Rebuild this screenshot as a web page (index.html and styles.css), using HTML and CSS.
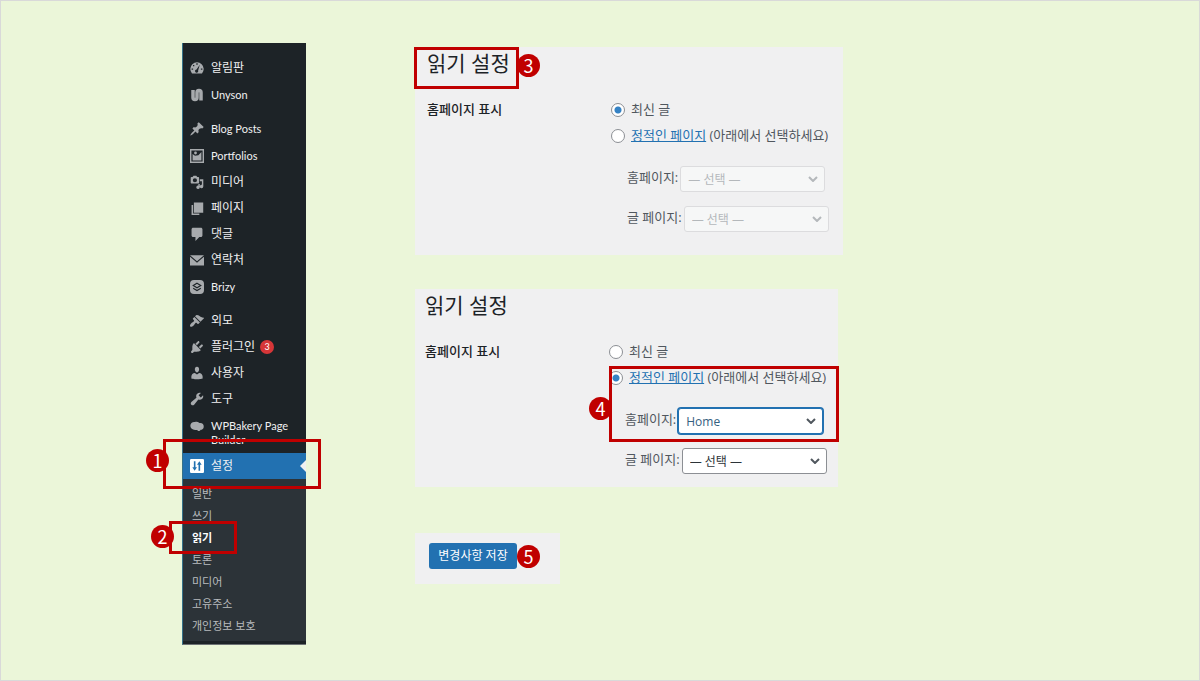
FILE: index.html
```html
<!DOCTYPE html>
<html lang="ko">
<head>
  <meta charset="UTF-8" />
  <meta name="viewport" content="width=device-width, initial-scale=1.0"/>
  <title>읽기 설정</title>
  <link rel="stylesheet" href="styles.css">
</head>
<body>
  <main class="guide">
    <nav class="sidebar">
      <ul class="menu">
        <li><a href="#"><svg viewBox="0 0 14 14"><path fill-rule="evenodd" d="M2 12.500A6.700 6.700 0 1 1 12 12.500zM6.300 2.200v1.500h1.400V2.200zM3 4v1.300h1.300V4zM1.600 7.500v1.300h1.500V7.500zM10.900 7.500v1.300h1.500V7.500zM9.800 3.800L6.500 8.500a1.600 1.600 0 1 0 1.600 1z"/></svg>알림판</a></li>
        <li class="latin"><a href="#"><svg viewBox="0 0 14 14"><path d="M3 2v7.500a2 2 0 0 0 4 0V4.500a2 2 0 0 1 4 0V12.500" fill="none" stroke="currentColor" stroke-width="3.500"/></svg>Unyson</a></li>
        <li class="gap latin-posts"><a href="#"><svg viewBox="1 1 18 18"><path d="M10.440 3.020l1.820-1.820 6.360 6.350-1.830 1.820c-1.050-.68-2.480-.57-3.410.36l-.75.75c-.92.930-1.040 2.350-.35 3.410l-1.830 1.820-2.410-2.410-2.800 2.790c-.42.420-3.380 2.710-3.800 2.290s1.860-3.390 2.280-3.810l2.790-2.790L4.100 9.360l1.830-1.820c1.050.690 2.480.570 3.400-.36l.75-.75c.930-.92 1.050-2.350.36-3.410z"/></svg>Blog Posts</a></li>
        <li class="latin"><a href="#"><svg viewBox="0 0 14 14"><path d="M.7.700h12.600v12.600H.7z" fill="none" stroke="currentColor" stroke-width="1.400"/><path d="M2.600 11.500V5l2.400 1.800 1.600-.3 1.800-.2L11.400 3v8.500z"/><circle cx="5.500" cy="4" r="1.400"/></svg>Portfolios</a></li>
        <li><a href="#"><svg viewBox="0 0 20 20"><path fill-rule="evenodd" d="M13 11V4c0-.55-.45-1-1-1h-1.670L9 1H5L3.670 3H2c-.55 0-1 .45-1 1v7c0 .55.450 1 1 1h10c.55 0 1-.45 1-1zM7 4.500a3 3 0 1 1 0 6 3 3 0 0 1 0-6zM14 6h5v10.500a2.500 2.500 0 1 1-2-2.450V9h-3v8.500a2.500 2.500 0 1 1-2-2.450V13h2z"/></svg>미디어</a></li>
        <li><a href="#"><svg viewBox="1 0 18 18"><path d="M6 15V2h12v13H6zm-1 1h8v2H3V5h2v11z"/></svg>페이지</a></li>
        <li><a href="#"><svg viewBox="1 1 18 18"><path d="M5 2h10c1.100 0 2 .900 2 2v8c0 1.100-.900 2-2 2h-2l-5 5v-5H5c-1.100 0-2-.900-2-2V4c0-1.100.900-2 2-2z"/></svg>댓글</a></li>
        <li><a href="#"><svg viewBox="1 1 18 18"><path d="M1 4h18L10 11.500zM1 5.800l5 4.200 4 3.400 4-3.400 5-4.200V17H1z"/></svg>연락처</a></li>
        <li class="latin"><a href="#"><svg viewBox="0 0 14 14"><rect width="14" height="14" rx="4"/><path d="M7 3.200L10.800 5.500 7 7.800 3.200 5.500zM3.200 8.200L7 10.500l3.800-2.300" fill="none" stroke="#1d2327" stroke-width="1.100"/></svg>Brizy</a></li>
        <li class="gap"><a href="#"><svg viewBox="1 1 18 18"><path d="M14.480 11.060L7.410 3.990l1.500-1.500c.5-.56 2.300-.47 3.510.320 1.210.8 1.430 1.280 2.910 2.100 1.180.640 2.450 1.260 4.450.850zm-.71.710L6.700 4.700 4.930 6.470c-.39.390-.39 1.020 0 1.410l1.060 1.060c.390.390.390 1.030 0 1.420-.6.600-1.430 1.110-2.210 1.690-.35.260-.7.530-1.010.840C1.430 14.230.4 16.080 1.400 17.070c.99 1 2.840-.03 4.180-1.360.31-.31.580-.66.850-1.020.570-.78 1.080-1.610 1.690-2.210.390-.39 1.020-.39 1.410 0l1.060 1.060c.390.390 1.020.390 1.410 0z"/></svg>외모</a></li>
        <li><a href="#"><svg viewBox="1 1 18 18"><path d="M13.110 4.360L9.870 7.600 8 5.730l3.240-3.240c.350-.34 1.050-.2 1.560.320.520.510.660 1.210.310 1.550zm-8 1.770l.91-1.120 9.010 9.010-1.190.840c-.71.710-2.630 1.160-3.820 1.160H6.140L4.900 17.260c-.59.590-1.540.590-2.120 0-.59-.58-.59-1.530 0-2.120L4 13.900v-3.880c0-1.130.4-3.190 1.110-3.890zm7.260 3.970l3.240-3.240c.34-.35 1.040-.21 1.550.310.520.510.660 1.210.310 1.550l-3.240 3.250z"/></svg>플러그인<span class="count">3</span></a></li>
        <li><a href="#"><svg viewBox="1 1 18 18"><path d="M10 9.250c-2.270 0-2.730-3.440-2.730-3.440C7 4.020 7.820 2 9.970 2c2.160 0 2.980 2.020 2.710 3.810 0 0-.41 3.440-2.680 3.440zm0 2.570L12.720 10c2.390 0 4.520 2.330 4.520 4.530v2.490s-3.650 1.130-7.240 1.130c-3.650 0-7.240-1.130-7.240-1.130v-2.490c0-2.250 1.940-4.480 4.470-4.480z"/></svg>사용자</a></li>
        <li><a href="#"><svg viewBox="1 1 18 18"><path d="M16.680 9.770c-1.340 1.340-3.300 1.670-4.950.990l-5.410 6.520c-.99.990-2.590.990-3.580 0s-.99-2.590 0-3.570l6.520-5.420c-.68-1.650-.35-3.610.990-4.950 1.280-1.280 3.120-1.620 4.720-1.060l-2.890 2.890 2.820 2.820 2.860-2.870c.530 1.580.180 3.390-1.080 4.650z"/></svg>도구</a></li>
        <li class="two-line"><a href="#"><svg viewBox="0 0 16 13"><path d="M5.500 2C9 .5 10.500 3 11.500 3.200 14 3 16 5 15.700 7.500c-.2 2-1.700 3.200-3.500 3.300C11.500 12.500 9 13 8.300 11c-3 .5-7.800-.7-7.900-4.800C.4 3.500 2.800 1.600 5.500 2z"/></svg>WPBakery Page Builder</a></li>
        <li class="active">
          <a href="#"><svg viewBox="1 1 12 12"><path fill-rule="evenodd" d="M2 1h10a1 1 0 0 1 1 1v10a1 1 0 0 1-1 1H2a1 1 0 0 1-1-1V2a1 1 0 0 1 1-1zM4.300 3v5H3l2 3 2-3H5.700V3zM8.300 11V6H7l2-3 2 3H9.700v5z"/></svg>설정</a>
          <span class="frame frame-settings"></span>
          <span class="step step-1">1</span>
        </li>
      </ul>
      <ul class="submenu">
        <li><a href="#">일반</a></li>
        <li><a href="#">쓰기</a></li>
        <li class="current">
          <a href="#">읽기</a>
          <span class="frame frame-reading"></span>
          <span class="step step-2">2</span>
        </li>
        <li><a href="#">토론</a></li>
        <li><a href="#">미디어</a></li>
        <li><a href="#">고유주소</a></li>
        <li><a href="#">개인정보 보호</a></li>
      </ul>
    </nav>

    <div class="screens">
      <section class="panel panel-before">
        <h2>읽기 설정</h2>
        <span class="frame frame-title"></span>
        <span class="step step-3">3</span>
        <div class="form-row">
          <h3>홈페이지 표시</h3>
          <div class="options">
            <div class="option"><input type="radio" name="show1" id="latest1" checked><label for="latest1">최신 글</label></div>
            <div class="option"><input type="radio" name="show1" id="static1"><label for="static1"><a href="#">정적인 페이지</a> (아래에서 선택하세요)</label></div>
            <div class="pages">
              <div class="field"><label for="home1">홈페이지:</label><select id="home1" disabled><option>— 선택 —</option></select></div>
              <div class="field"><label for="posts1">글 페이지:</label><select id="posts1" disabled><option>— 선택 —</option></select></div>
            </div>
          </div>
        </div>
      </section>

      <section class="panel panel-after">
        <h2>읽기 설정</h2>
        <div class="form-row">
          <h3>홈페이지 표시</h3>
          <div class="options">
            <div class="option"><input type="radio" name="show2" id="latest2"><label for="latest2">최신 글</label></div>
            <div class="option"><input type="radio" name="show2" id="static2" checked><label for="static2"><a href="#">정적인 페이지</a> (아래에서 선택하세요)</label></div>
            <div class="pages">
              <div class="field"><label for="home2">홈페이지:</label><select id="home2" class="focused"><option>Home</option></select></div>
              <div class="field"><label for="posts2">글 페이지:</label><select id="posts2"><option>— 선택 —</option></select></div>
            </div>
            <span class="frame frame-static"></span>
            <span class="step step-4">4</span>
          </div>
        </div>
      </section>

      <section class="panel panel-save">
        <button type="button">변경사항 저장</button>
        <span class="step step-5">5</span>
      </section>
    </div>
  </main>
</body>
</html>
```
FILE: styles.css
```css
* {
  box-sizing: border-box;
}
body {
  margin: 0;
  font-family: "Open Sans", "Noto Sans CJK KR", sans-serif;
  font-size: 13px;
  color: #50575e;
  background: #ebf6d9;
}
ul, h2, h3 {
  margin: 0;
  padding: 0;
  list-style: none;
}
.guide {
  display: flex;
  align-items: flex-start;
  gap: 109px;
  min-height: 100vh;
  padding: 42px 20px 34px 181px;
  border: 1px solid #d9d9d9;
}

/* admin menu */
.sidebar {
  flex: none;
  width: 124px;
  background: #1d2327;
  border-left: 1px solid #35728a;
  border-bottom: 1px solid #6d7275;
  padding: 12px 0 3px;
  font-family: Lato, "Noto Sans CJK KR", sans-serif;
}
.sidebar a {
  color: #f0f0f1;
  text-decoration: none;
}
.menu li {
  position: relative;
  font-size: 12px;
  line-height: 26px;
}
.menu a {
  display: flex;
  align-items: center;
  gap: 7px;
  padding-left: 7px;
}
.menu svg {
  flex: none;
  width: 14px;
  height: 14px;
  color: #a7aaad;
  fill: currentColor;
}
.menu .latin {
  line-height: 27px;
}
.menu .latin,
.menu .latin-posts,
.menu .two-line {
  font-size: 11px;
}
.menu .gap {
  margin-top: 8px;
}
.menu .two-line {
  padding: 7px 0 6px;
  line-height: 14px;
}
.menu .two-line a {
  align-items: flex-start;
}
.count {
  width: 14px;
  height: 14px;
  margin-left: -2px;
  border-radius: 50%;
  background: #d63638;
  color: #fff;
  font-size: 9px;
  line-height: 14px;
  text-align: center;
}
.menu .active {
  background: #2271b1;
}
.menu .active svg {
  color: #fff;
}
.menu .active::after {
  content: "";
  position: absolute;
  right: 0;
  top: 7px;
  border: 6px solid transparent;
  border-left: 0;
  border-right-color: #f0f0f1;
}
.submenu {
  padding: 4px 0;
  background: #2c3338;
}
.submenu li {
  position: relative;
  padding-left: 9px;
  font-size: 11px;
  line-height: 22px;
}
.submenu a {
  display: block;
  color: #b9bcbf;
}
.submenu .current a {
  color: #fff;
  font-weight: bold;
}

/* settings screens */
.screens {
  display: flex;
  flex-direction: column;
  align-items: flex-start;
  padding-top: 4px;
}
.panel {
  position: relative;
  background: #f0f0f1;
}
.panel-before {
  width: 428px;
  padding: 0 0 23px 12px;
}
.panel-after {
  width: 423px;
  margin-top: 34px;
  padding: 0 0 13px 10px;
}
.panel-save {
  width: 145px;
  margin-top: 46px;
  padding: 10px 14px 15px;
}
.panel h2 {
  color: #1d2327;
  font-size: 21px;
  font-weight: normal;
  line-height: 32px;
}
.form-row {
  display: grid;
  grid-template-columns: 184px 1fr;
  margin-top: 18px;
}
.form-row h3 {
  color: #1d2327;
  font-size: 13px;
  font-weight: 500;
  line-height: 24px;
}
.options {
  position: relative;
}
.option {
  display: flex;
  align-items: center;
  gap: 6px;
  line-height: 26px;
  white-space: nowrap;
}
.option label {
  line-height: 24px;
  padding-bottom: 2px;
}
.option a {
  color: #2271b1;
}
input[type="radio"] {
  appearance: none;
  flex: none;
  width: 14px;
  height: 14px;
  margin: 0;
  border: 1px solid #8c8f94;
  border-radius: 50%;
  background: #fff;
}
input[type="radio"]:checked {
  background: radial-gradient(circle, #3582c4 3px, #fff 4px);
}
.pages {
  display: flex;
  flex-direction: column;
  gap: 14px;
  padding: 17px 0 0 16px;
}
.field {
  display: flex;
  align-items: flex-start;
  gap: 2px;
}
.field label {
  line-height: 22px;
}
select {
  appearance: none;
  width: 145px;
  height: 26px;
  padding: 0 24px 0 7px;
  border: 1px solid #8c8f94;
  border-radius: 3px;
  background: #fff url("data:image/svg+xml,%3Csvg xmlns='http://www.w3.org/2000/svg' width='10' height='6'%3E%3Cpath d='M1 1l4 4 4-4' fill='none' stroke='%2350575e' stroke-width='2'/%3E%3C/svg%3E") no-repeat right 6px center;
  color: #2c3338;
  font-family: inherit;
  font-size: 12px;
}
select:disabled {
  border-color: #dcdcde;
  background-color: #f6f7f7;
  background-image: url("data:image/svg+xml,%3Csvg xmlns='http://www.w3.org/2000/svg' width='10' height='6'%3E%3Cpath d='M1 1l4 4 4-4' fill='none' stroke='%23b4b8bb' stroke-width='2'/%3E%3C/svg%3E");
  color: #b4b8bb;
  opacity: 1;
}
select.focused {
  border-color: #2271b1;
  box-shadow: 0 0 0 1px #2271b1;
  color: #35607f;
}
button {
  display: block;
  width: 88px;
  height: 26px;
  padding: 0 0 2px;
  border: 0;
  border-radius: 3px;
  background: #2271b1;
  color: #fff;
  font-family: inherit;
  font-size: 12px;
  white-space: nowrap;
}

/* red frames and step numbers laid over the screens */
.frame {
  position: absolute;
  border: 3px solid #c00000;
}
.step {
  position: absolute;
  width: 23px;
  height: 23px;
  border-radius: 50%;
  background: #c00000;
  color: #fff;
  font-family: "Noto Sans CJK KR", sans-serif;
  font-size: 18px;
  line-height: 22px;
  text-align: center;
}
.menu .step,
.submenu .step {
  font-size: 18px;
  line-height: 22px;
}
.frame-settings {
  left: -20px;
  top: -14px;
  width: 158px;
  height: 50px;
}
.step-1 {
  left: -37px;
  top: -4px;
}
.frame-reading {
  left: -14px;
  top: -6px;
  width: 68px;
  height: 33px;
}
.step-2 {
  left: -32px;
  top: -2px;
}
.frame-title {
  left: -1px;
  top: 0;
  width: 105px;
  height: 42px;
}
.step-3 {
  left: 102px;
  top: 7px;
}
.frame-static {
  left: 0;
  top: 27px;
  width: 230px;
  height: 76px;
}
.step-4 {
  left: -20px;
  top: 58px;
}
.step-5 {
  left: 102px;
  top: 12px;
}
```
